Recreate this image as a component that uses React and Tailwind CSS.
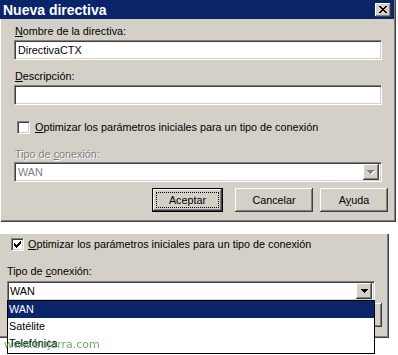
import React from "react";

const FIELD =
  "border border-t-[#808080] border-l-[#808080] border-b-white border-r-white shadow-[inset_1px_1px_0_#404040,inset_-1px_-1px_0_#d4d0c8]";
const RAISED =
  "bg-[#d4d0c8] shadow-[inset_-1px_-1px_0_#404040,inset_1px_1px_0_#ffffff,inset_-2px_-2px_0_#808080,inset_2px_2px_0_#d4d0c8]";

function Pixels({ rows, color, w, h, className = "" }) {
  const rects = [];
  rows.forEach((row, y) => {
    for (let x = 0; x < row.length; x++) {
      if (row[x] === "#") rects.push(<rect key={`${x}-${y}`} x={x} y={y} width="1" height="1" fill={color} />);
    }
  });
  return (
    <svg width={w} height={h} viewBox={`0 0 ${w} ${h}`} shapeRendering="crispEdges" className={className}>
      {rects}
    </svg>
  );
}

const X_ROWS = ["##....##", ".##..##.", "..####..", "...##...", "..####..", ".##..##.", "##....##"];
const CHECK_ROWS = ["......#", ".....##", "#...###", "##.###.", "#####..", ".###...", "..#...."];
const ARROW_ROWS = ["#######", ".#####.", "..###..", "...#..."];

function CloseBtn() {
  return (
    <div className={`w-[16px] h-[14px] flex items-center justify-center ${RAISED}`}>
      <Pixels rows={X_ROWS} color="#000" w={8} h={7} />
    </div>
  );
}

function ArrowBtn({ disabled }) {
  return (
    <div className={`w-[16px] h-[16px] flex items-center justify-center ${RAISED}`}>
      {disabled ? (
        <div className="relative w-[8px] h-[5px]">
          <Pixels rows={ARROW_ROWS} color="#ffffff" w={7} h={4} className="absolute left-[1px] top-[1px]" />
          <Pixels rows={ARROW_ROWS} color="#808080" w={7} h={4} className="absolute left-0 top-0" />
        </div>
      ) : (
        <Pixels rows={ARROW_ROWS} color="#000" w={7} h={4} />
      )}
    </div>
  );
}

function CheckBox({ checked }) {
  return (
    <div className={`w-[13px] h-[13px] bg-white flex items-center justify-center ${FIELD}`}>
      {checked && <Pixels rows={CHECK_ROWS} color="#000" w={7} h={7} />}
    </div>
  );
}

function Button({ children, w, isDefault }) {
  if (isDefault) {
    return (
      <div className={`h-[24px] border border-black flex`} style={{ width: w }}>
        <div className={`flex-1 flex p-[3px] ${RAISED}`}>
          <div className="flex-1 flex items-center justify-center border border-dotted border-black">{children}</div>
        </div>
      </div>
    );
  }
  return (
    <div className={`h-[24px] flex items-center justify-center ${RAISED}`} style={{ width: w }}>
      {children}
    </div>
  );
}

export default function App() {
  return (
    <div className="relative w-[398px] h-[355px] bg-white overflow-hidden font-['Liberation_Sans',Arial,sans-serif] text-[10.8px] leading-[13px] text-black">
      {/* Dialog 1 */}
      <div className="w-[396px] h-[222px] bg-[#d4d0c8] flex flex-col shadow-[inset_1px_0_0_#ffffff,inset_-1px_-1px_0_#404040,inset_-2px_-2px_0_#808080]">
        <div className="h-[19px] mr-[2px] bg-[#0a246a] flex items-center justify-between pl-[3px] pr-[3px]">
          <span className="text-white font-bold text-[14px] leading-[16px]">Nueva directiva</span>
          <CloseBtn />
        </div>
        <div className="flex flex-col pl-[14px]">
          <div className="mt-[6px] pl-[1px]">
            <span className="underline underline-offset-1">N</span>ombre de la directiva:
          </div>
          <div className={`mt-[2px] w-[368px] h-[20px] bg-white flex items-center pl-[3px] ${FIELD}`}>DirectivaCTX</div>
          <div className="mt-[10px] pl-[1px]">
            <span className="underline underline-offset-1">D</span>escripción:
          </div>
          <div className={`mt-[2px] w-[368px] h-[20px] bg-white ${FIELD}`} />
          <div className="mt-[16px] ml-[3px] flex items-center gap-[5px]">
            <CheckBox />
            <span>
              <span className="underline underline-offset-1">O</span>ptimizar los parámetros iniciales para un tipo de conexión
            </span>
          </div>
          <div className="mt-[14px] pl-[1px] text-[#808080] [text-shadow:1px_1px_0_#ffffff]">
            Tipo de <span className="underline underline-offset-1">c</span>onexión:
          </div>
          <div className={`mt-[1px] w-[368px] h-[20px] bg-white flex items-center justify-between pl-[3px] pr-[2px] ${FIELD}`}>
            <span className="text-[#808080] [text-shadow:1px_1px_0_#ffffff]">WAN</span>
            <ArrowBtn disabled />
          </div>
          <div className="mt-[6px] ml-[138px] flex">
            <Button w={71} isDefault>Aceptar</Button>
            <div className="ml-[12px]">
              <Button w={78}>Cancelar</Button>
            </div>
            <div className="ml-[7px]">
              <Button w={68}>
                <span>
                  A<span className="underline underline-offset-1">y</span>uda
                </span>
              </Button>
            </div>
          </div>
        </div>
      </div>

      {/* Dialog 2 (partial) */}
      <div className="mt-[11px] w-[389px] h-[105px] bg-[#d4d0c8] flex flex-col shadow-[inset_0_1px_0_#ffffff,inset_-1px_-1px_0_#404040,inset_-2px_-2px_0_#808080]">
        <div className="mt-[5px] ml-[11px] flex items-center gap-[4px]">
          <CheckBox checked />
          <span>
            <span className="underline underline-offset-1">O</span>ptimizar los parámetros iniciales para un tipo de conexión
          </span>
        </div>
        <div className="mt-[14px] ml-[7px]">
          Tipo de <span className="underline underline-offset-1">c</span>onexión:
        </div>
        <div className={`mt-[3px] ml-[7px] w-[368px] h-[20px] bg-white flex items-center justify-between pl-[2px] pr-[2px] ${FIELD}`}>
          <span>WAN</span>
          <ArrowBtn />
        </div>
        <div className="mt-[2px] ml-[300px]">
          <Button w={82}>Ayuda</Button>
        </div>
      </div>

      {/* Open dropdown list */}
      <div className="absolute left-[7px] top-[300px] w-[368px] h-[54px] bg-white border border-black flex flex-col">
        <div className="h-[17px] bg-[#0a246a] text-white flex items-center pl-[1px]">WAN</div>
        <div className="h-[17px] flex items-center pl-[1px]">Satélite</div>
        <div className="h-[17px] flex items-center pl-[1px]">Telefónica</div>
      </div>

      {/* Watermark */}
      <div className="absolute left-[4px] top-[338px] font-['DejaVu_Sans',sans-serif] text-[11px] leading-[13px] text-[#3f9a3f] opacity-80">
        www.bujarra.com
      </div>
    </div>
  );
}
